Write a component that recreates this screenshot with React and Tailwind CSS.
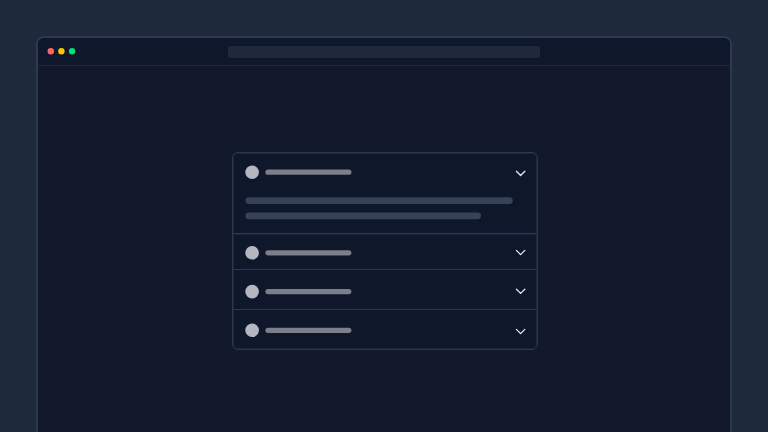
function Chevron({ y }) {
  return (
    <svg className="h-full w-3 shrink-0 overflow-visible" fill="none">
      <path
        d={`M2.4 ${y - 2}L6.6 ${y + 2.2}L10.8 ${y - 2}`}
        stroke="#e2e8f0"
        strokeWidth="1.3"
        strokeLinecap="round"
        strokeLinejoin="round"
      />
    </svg>
  );
}

function Row({ height, cy, chevronY }) {
  return (
    <div className={`flex shrink-0 items-start justify-between pl-3 pr-[11px] ${height}`}>
      <svg className="h-full w-[110px] overflow-visible" fill="none">
        <circle cx="7.1" cy={cy} r="6.8" fill="#b4b7c0" />
        <rect x="20.4" y={cy - 2.6} width="86" height="5.2" rx="2.6" fill="#7b7e8b" />
      </svg>
      <Chevron y={chevronY} />
    </div>
  );
}

function TextLines() {
  return (
    <svg className="ml-3 h-6 w-[270px] shrink-0" fill="none">
      <rect x="0.4" y="0.2" width="267.4" height="6.8" rx="3.4" fill="#364258" />
      <rect x="0.4" y="15.4" width="235.6" height="6.8" rx="3.4" fill="#364258" />
    </svg>
  );
}

export default function App() {
  return (
    <div className="h-[432px] w-[768px] overflow-hidden bg-[#1e2a3b] px-9 pt-9">
      <main className="flex h-[420px] w-[696px] flex-col overflow-hidden rounded-lg border-2 border-[#2c3a4f] bg-[#11192b]">
        <header className="flex h-7 shrink-0 items-center border-b border-[#1e2a3b] bg-[#0f172a]">
          <svg className="h-full w-[190px]" fill="none">
            <circle cx="12.8" cy="13.2" r="3.2" fill="#ff6467" />
            <circle cx="23.4" cy="13.2" r="3.2" fill="#fdc700" />
            <circle cx="34.1" cy="13.2" r="3.2" fill="#05df72" />
          </svg>
          <div className="h-3 w-[312px] rounded-xs bg-[#1e2a3b]" />
        </header>
        <section className="ml-[194px] mt-[86px] flex h-[198px] w-[306px] flex-col overflow-hidden rounded-md border border-[#2b394e] bg-[#0f172a] shadow-[inset_0_0_0_1px_#1b263a]">
          <div className="flex h-20 shrink-0 flex-col">
            <Row height="h-11" cy={19.2} chevronY={20.3} />
            <TextLines />
          </div>
          <div className="h-px shrink-0 bg-[#2b394e] shadow-[0_1px_0_#18233a]" />
          <Row height="h-[35px]" cy={18.8} chevronY={18.4} />
          <div className="h-px shrink-0 bg-[#2b394e]" />
          <Row height="h-[39px]" cy={21.6} chevronY={21.2} />
          <div className="h-px shrink-0 bg-[#2b394e]" />
          <Row height="h-[39px]" cy={20.3} chevronY={21.4} />
        </section>
      </main>
    </div>
  );
}
